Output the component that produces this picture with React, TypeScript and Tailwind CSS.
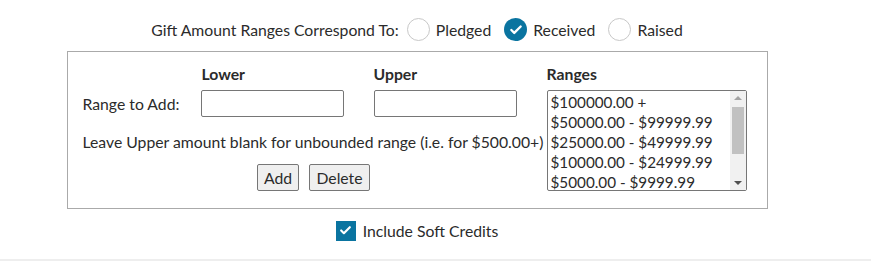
import { Check } from "lucide-react";

const RANGES = [
  "$100000.00 +",
  "$50000.00 - $99999.99",
  "$25000.00 - $49999.99",
  "$10000.00 - $24999.99",
  "$5000.00 - $9999.99",
];

const OPTIONS = [
  { label: "Pledged", checked: false },
  { label: "Received", checked: true },
  { label: "Raised", checked: false },
];

function Radio({ checked }: { checked: boolean }) {
  if (checked) {
    return (
      <span className="flex h-[23px] w-[23px] items-center justify-center rounded-full bg-[#0a74a0]">
        <Check size={14} strokeWidth={4} className="text-white" />
      </span>
    );
  }
  return <span className="h-[23px] w-[23px] rounded-full border border-[#c8c8c8] bg-white" />;
}

export default function App() {
  return (
    <div
      className="h-[261px] w-[871px] border-b-2 border-[#eeeeee] bg-white text-[15.75px] text-[#2b2b2b]"
      style={{ fontFamily: "Lato, 'Open Sans', sans-serif" }}
    >
      <div className="flex w-[834px] flex-col items-center">
        <div className="mt-[18px] flex h-[23px] items-center">
          <span className="mr-[8px]">Gift Amount Ranges Correspond To:</span>
          {OPTIONS.map((o) => (
            <label key={o.label} className="mr-[13px] flex items-center gap-[6px] last:mr-0">
              <Radio checked={o.checked} />
              <span>{o.label}</span>
            </label>
          ))}
        </div>

        <div className="mt-[10px] flex h-[158px] w-[701px] border border-[#aaaaaa] pl-[15px] pt-[10px]">
          <div className="w-[464px]">
            <div className="flex h-[20px] font-bold">
              <span className="ml-[119px] w-[172px]">Lower</span>
              <span>Upper</span>
            </div>
            <div className="mt-[8px] flex items-center">
              <span className="w-[118px]">Range to Add:</span>
              <input className="h-[27px] w-[143px] rounded-[2px] border border-[#767676] px-1" />
              <input className="ml-[30px] h-[27px] w-[143px] rounded-[2px] border border-[#767676] px-1" />
            </div>
            <div className="mt-[15px] h-[20px] whitespace-nowrap leading-[20px]">
              Leave Upper amount blank for unbounded range (i.e. for $500.00+)
            </div>
            <div className="mt-[12px] flex justify-center gap-[10px] pr-[2px]">
              <button className="h-[27px] w-[42px] rounded-[2px] border border-[#767676] bg-[#efefef]">Add</button>
              <button className="h-[27px] w-[61px] rounded-[2px] border border-[#767676] bg-[#efefef]">Delete</button>
            </div>
          </div>

          <div className="w-[200px]">
            <div className="h-[20px] font-bold">Ranges</div>
            <div className="mt-[8px] flex h-[101px] w-[200px] rounded-[2px] border border-[#767676]">
              <div className="flex-1 overflow-hidden py-[1px] pl-[3px] text-[15.25px]">
                {RANGES.map((r) => (
                  <div key={r} className="h-[20px] whitespace-nowrap leading-[20px]">
                    {r}
                  </div>
                ))}
              </div>
              <div className="flex w-[16px] flex-col items-center bg-[#f1f1f1]">
                <div className="mt-[5px] h-0 w-0 border-x-[4px] border-b-[4px] border-x-transparent border-b-[#a3a3a3]" />
                <div className="mt-[7px] h-[47px] w-[12px] bg-[#c1c1c1]" />
                <div className="mt-auto mb-[5px] h-0 w-0 border-x-[4px] border-t-[4px] border-x-transparent border-t-[#505050]" />
              </div>
            </div>
          </div>
        </div>

        <label className="mt-[10px] flex items-center gap-[7px]">
          <span className="flex h-[20px] w-[20px] items-center justify-center bg-[#0a74a0]">
            <Check size={13} strokeWidth={4} className="text-white" />
          </span>
          <span>Include Soft Credits</span>
        </label>
      </div>
    </div>
  );
}
